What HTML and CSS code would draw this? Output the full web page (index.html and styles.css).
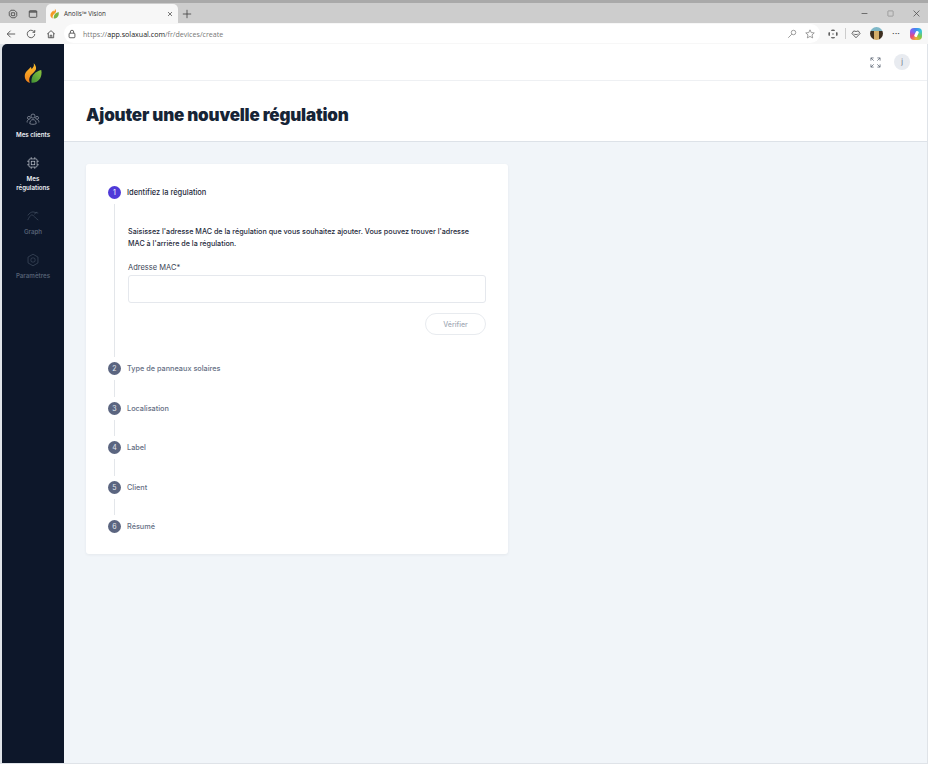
FILE: index.html
```html
<!DOCTYPE html>
<html lang="fr">
<head>
    <meta charset="UTF-8">
    <meta name="viewport" content="width=device-width, initial-scale=1.0">
    <title>Anolis™ Vision</title>
    <link rel="stylesheet" href="styles.css">
</head>
<body>
    <!-- Browser tab strip -->
    <div class="tabstrip">
        <svg class="chrome-icon" viewBox="0 0 12 12"><path d="M3.500 1.500h4l3 2.500v4l-2 2.500h-4l-3-2.500v-4z M4 4.500h4v3.500h-4z"/></svg>
        <svg class="chrome-icon gap-tab" viewBox="0 0 12 12"><rect x="1.500" y="2" width="9" height="8" rx="1"/><path class="thick" d="M1.500 3.500h9"/></svg>
        <div class="tab">
            <svg class="tab-logo" viewBox="0 0 24 28"><path fill="#f59a23" d="M13 1c1 4-1 6-3 8 0-1 0-2-1-3C7 9 1 12 1 18c0 5 3 8 7 9-2-3-1-7 1-10 3-3 6-5 7-8 .6-3-1-6-3-8z"/><path fill="#7cb342" d="M23 10c-8 2-14 7-13 17 9 1 15-7 13-17z"/></svg>
            <span class="tab-title">Anolis™ Vision</span>
            <svg class="tab-close" viewBox="0 0 12 12"><path d="M2 2l8 8M10 2l-8 8"/></svg>
        </div>
        <svg class="chrome-icon plus" viewBox="0 0 12 12"><path d="M6 1v10M1 6h10"/></svg>
        <div class="window-btns">
            <svg class="win-icon" viewBox="0 0 12 12"><path d="M1 6h10"/></svg>
            <svg class="win-icon light" viewBox="0 0 12 12"><rect x="1.500" y="1.500" width="9" height="9" rx="1"/></svg>
            <svg class="win-icon" viewBox="0 0 12 12"><path d="M1 1l10 10M11 1L1 11"/></svg>
        </div>
    </div>

    <!-- Browser toolbar -->
    <div class="toolbar">
        <svg class="chrome-icon" viewBox="0 0 12 12"><path d="M11 6H1.500M5.500 2l-4 4 4 4"/></svg>
        <svg class="chrome-icon tool" viewBox="0 0 12 12"><path d="M10.500 6a4.500 4.500 0 1 1-1.300-3.200L10.500 4V1.200M10.500 4H7.800"/></svg>
        <svg class="chrome-icon tool" viewBox="0 0 12 12"><path d="M1.500 6L6 2l4.500 4M2.800 5v5.500h6.400V5M5 10.500V7.500h2v3"/></svg>
        <div class="urlbar">
            <svg class="chrome-icon" viewBox="0 0 12 12"><rect x="2.500" y="5" width="7" height="5.500" rx="1"/><path d="M4 5V3.500a2 2 0 0 1 4 0V5"/></svg>
            <span class="url"><span class="url-dim">https://</span>app.solaxual.com<span class="url-dim">/fr/devices/create</span></span>
            <svg class="chrome-icon light" viewBox="0 0 12 12"><circle cx="7.800" cy="4.200" r="2.700"/><path d="M5.800 6.200L1.500 10.500"/></svg>
            <svg class="chrome-icon light" viewBox="0 0 12 12"><path d="M6 1l1.500 3.300 3.600.4-2.700 2.400.8 3.600L6 8.900l-3.200 1.800.8-3.600L.9 4.700l3.600-.4z"/></svg>
        </div>
        <svg class="chrome-icon ext" viewBox="0 0 12 12"><path class="thick" d="M4 1.800a4.500 4.500 0 0 1 4 0M10.200 4a4.500 4.500 0 0 1 0 4M8 10.200a4.500 4.500 0 0 1-4 0M1.800 8a4.500 4.500 0 0 1 0-4"/><path d="M5 6h2"/></svg>
        <span class="toolbar-sep"></span>
        <svg class="chrome-icon heart" viewBox="0 0 12 12"><path d="M6 10.500L1.200 5.500 3 2.500h2l1 1 1-1h2l1.800 3zM3.500 5.500l1.500 1.500 1-1 1 1 1.500-1.500"/></svg>
        <span class="avatar"></span>
        <span class="dots">···</span>
        <span class="copilot"></span>
    </div>

    <div class="app">
        <!-- Sidebar -->
        <nav class="sidebar">
            <svg class="logo" viewBox="0 0 24 28"><defs><linearGradient id="flame" x1="0" y1="0" x2="0" y2="1"><stop offset="0" stop-color="#fbc02d"/><stop offset="1" stop-color="#ef7f1a"/></linearGradient><linearGradient id="leaf" x1="1" y1="0" x2="0" y2="1"><stop offset="0" stop-color="#8cc63f"/><stop offset="1" stop-color="#3f8f35"/></linearGradient></defs><path fill="url(#flame)" d="M13 1c1 4-1 6-3 8 0-1 0-2-1-3C7 9 1 12 1 18c0 5 3 8 7 9-2-3-1-7 1-10 3-3 6-5 7-8 .6-3-1-6-3-8z"/><path fill="url(#leaf)" d="M23 10c-8 2-14 7-13 17 9 1 15-7 13-17z"/></svg>
            <a class="nav-item active">
                <svg class="nav-icon dim" viewBox="0 0 24 24"><circle cx="12" cy="7" r="3.500"/><circle cx="5" cy="10" r="2.500"/><circle cx="19" cy="10" r="2.500"/><path d="M6.500 20c0-4 2-7 5.500-7s5.500 3 5.500 7c-3 1.500-8 1.500-11 0zM2 18c-.5-2 .5-4 2.500-5M22 18c.5-2-.5-4-2.500-5"/></svg>
                <span>Mes clients</span>
            </a>
            <a class="nav-item active">
                <svg class="nav-icon" viewBox="0 0 24 24"><rect x="5" y="5" width="14" height="14" rx="2"/><rect x="9" y="9" width="6" height="6"/><path d="M9 2v3M15 2v3M9 19v3M15 19v3M2 9h3M2 15h3M19 9h3M19 15h3"/></svg>
                <span>Mes<br>régulations</span>
            </a>
            <a class="nav-item">
                <svg class="nav-icon" viewBox="0 0 24 24"><path d="M3 11c3-4 6-6 9-6l9 2M3 19c2-4 4-8 7-9 3 0 6 6 11 9M14 9l5-4"/></svg>
                <span>Graph</span>
            </a>
            <a class="nav-item">
                <svg class="nav-icon" viewBox="0 0 24 24"><path d="M12 2l8.500 5v10L12 22l-8.500-5V7z"/><rect x="8.500" y="8.500" width="7" height="7" rx="2.500"/></svg>
                <span>Paramètres</span>
            </a>
        </nav>

        <div class="main">
            <header class="topbar">
                <svg class="expand" viewBox="0 0 12 12"><path d="M1 4V1h3M1 1l3 3M8 1h3v3M11 1L8 4M1 8v3h3M1 11l3-3M8 11h3V8M11 11L8 8"/></svg>
                <span class="user-badge">j</span>
            </header>
            <div class="page-head">
                <h1>Ajouter une nouvelle régulation</h1>
            </div>
            <div class="content">
                <section class="card">
                    <!-- Stepper -->
                    <div class="step">
                        <div class="step-head"><span class="step-num current">1</span><span class="step-label current">Identifiez la régulation</span></div>
                        <div class="step-body open">
                            <p class="help">Saisissez l'adresse MAC de la régulation que vous souhaitez ajouter. Vous pouvez trouver l'adresse MAC à l'arrière de la régulation.</p>
                            <label class="field-label" for="mac">Adresse MAC*</label>
                            <input class="field" id="mac" type="text">
                            <div class="actions"><button class="verify" disabled>Vérifier</button></div>
                        </div>
                    </div>
                    <div class="step">
                        <div class="step-head"><span class="step-num">2</span><span class="step-label">Type de panneaux solaires</span></div>
                        <div class="step-body"></div>
                    </div>
                    <div class="step">
                        <div class="step-head"><span class="step-num">3</span><span class="step-label">Localisation</span></div>
                        <div class="step-body"></div>
                    </div>
                    <div class="step">
                        <div class="step-head"><span class="step-num">4</span><span class="step-label">Label</span></div>
                        <div class="step-body"></div>
                    </div>
                    <div class="step">
                        <div class="step-head"><span class="step-num">5</span><span class="step-label">Client</span></div>
                        <div class="step-body"></div>
                    </div>
                    <div class="step">
                        <div class="step-head"><span class="step-num">6</span><span class="step-label">Résumé</span></div>
                    </div>
                </section>
            </div>
        </div>
    </div>
</body>
</html>
```

FILE: styles.css
```css
/* General Page Styling */
* {
    box-sizing: border-box;
}

body {
    margin: 0;
    height: 764px;
    display: flex;
    flex-direction: column;
    background-color: #fff;
    font-family: "Inter", "Liberation Sans", sans-serif;
    overflow: hidden;
}

/* Browser chrome */
.tabstrip {
    height: 23px;
    flex: none;
    display: flex;
    align-items: flex-end;
    padding: 0 8px;
    background-color: #cdcdcd;
    border-top: 3px solid #a9a9a9;
}

.chrome-icon {
    width: 10px;
    height: 10px;
    flex: none;
    fill: none;
    stroke: #444;
    stroke-width: 1;
}

.chrome-icon.light,
.win-icon.light {
    stroke: #8a8a8a;
}

.thick {
    stroke-width: 1.6;
}

.tabstrip > .chrome-icon {
    margin-bottom: 4px;
}

.gap-tab {
    margin-left: 10px;
    margin-right: 8px;
}

.tab {
    width: 132px;
    height: 19px;
    display: flex;
    align-items: center;
    padding: 0 5px 0 4px;
    background-color: #f7f7f7;
    border-radius: 5px 5px 0 0;
}

.tab-logo {
    width: 9px;
    height: 11px;
    margin-right: 5px;
}

.tab-title {
    flex: 1;
    font-size: 6.3px;
    color: #333;
    font-family: "Open Sans", sans-serif;
}

.tab-close {
    width: 6px;
    height: 6px;
    fill: none;
    stroke: #444;
    stroke-width: 1.4;
}

.plus {
    margin-left: 4px;
}

.window-btns {
    margin-left: auto;
    display: flex;
    gap: 19px;
    margin-bottom: 6px;
}

.win-icon {
    width: 7px;
    height: 7px;
    fill: none;
    stroke: #444;
    stroke-width: 1.2;
}

.toolbar {
    height: 21px;
    flex: none;
    display: flex;
    align-items: center;
    padding: 0 6px;
    background-color: #f7f7f7;
}

.tool {
    margin-left: 10px;
}

.urlbar {
    width: 756px;
    height: 19px;
    margin-left: 8px;
    display: flex;
    align-items: center;
    gap: 8px;
    padding: 0 5px 0 3px;
    background-color: #fff;
    border-radius: 10px;
}

.url {
    flex: 1;
    margin-left: -2px;
    font-size: 7.1px;
    color: #222;
    font-family: "Open Sans", sans-serif;
}

.url-dim {
    color: #777;
}

.ext {
    margin-left: 8px;
}

.toolbar-sep {
    width: 1px;
    height: 11px;
    margin-left: 7px;
    background-color: #ccc;
}

.heart {
    margin-left: 5px;
}

.avatar {
    width: 13px;
    height: 13px;
    margin-left: 9px;
    flex: none;
    border-radius: 50%;
    background:
        linear-gradient(90deg, #3d2f20 0 30%, #d3ad6a 30% 70%, #3d2f20 70%) 0 4px / 100% 100% no-repeat,
        #7fb8c8;
}

.dots {
    width: 12px;
    margin-left: 7px;
    text-align: center;
    font-size: 9px;
    color: #333;
}

.copilot {
    width: 12px;
    height: 12px;
    margin-left: 8px;
    flex: none;
    display: flex;
    align-items: center;
    justify-content: center;
    border-radius: 4px;
    background: conic-gradient(#3f8cf0, #38c6d8, #7cc84a, #f2b233, #e8487a, #8b5cf0, #3f8cf0);
}

.copilot::after {
    content: "";
    width: 3px;
    height: 6px;
    background-color: #fff;
    border-radius: 1px;
    transform: rotate(25deg);
}

/* App layout */
.app {
    flex: 1;
    display: flex;
    min-height: 0;
    padding: 0 1px 1px 2px;
    background-color: #dfe3e8;
}

.sidebar {
    width: 62px;
    flex: none;
    display: flex;
    flex-direction: column;
    align-items: center;
    padding-top: 18px;
    background-color: #0d172a;
    border-radius: 5px 0 0 0;
}

.logo {
    width: 18px;
    height: 22px;
    margin-bottom: 28px;
}

.nav-item {
    width: 100%;
    display: flex;
    flex-direction: column;
    align-items: center;
    gap: 4px;
    height: 44px;
    text-align: center;
    font-size: 6.2px;
    line-height: 9px;
    font-weight: 600;
    color: #535f72;
}

.nav-item.active {
    color: #eef1f5;
}

.nav-item:nth-of-type(2) {
    height: 53px;
}

.nav-icon {
    width: 14px;
    height: 14px;
    fill: none;
    stroke: #414d60;
    stroke-width: 1.2;
}

.active .nav-icon {
    stroke: #c4cad3;
}

.active .nav-icon.dim {
    stroke: #99a1ae;
}

.main {
    flex: 1;
    min-width: 0;
    display: flex;
    flex-direction: column;
}

.topbar {
    height: 37px;
    flex: none;
    display: flex;
    align-items: center;
    justify-content: flex-end;
    gap: 13px;
    padding-right: 17px;
    background-color: #fff;
    border-bottom: 1px solid #eef0f3;
}

.expand {
    width: 11px;
    height: 11px;
    fill: none;
    stroke: #555f6d;
    stroke-width: 0.8;
}

.user-badge {
    width: 16px;
    height: 16px;
    border-radius: 50%;
    background-color: #e8ebf0;
    color: #5c6675;
    font-size: 7px;
    line-height: 16px;
    text-align: center;
}

.page-head {
    height: 61px;
    flex: none;
    display: flex;
    align-items: center;
    padding: 7px 0 0 22px;
    background-color: #fff;
    border-bottom: 1px solid #dde2e8;
}

h1 {
    margin: 0;
    font-size: 17px;
    font-weight: 900;
    color: #162436;
    letter-spacing: -0.2px;
}

.content {
    flex: 1;
    padding: 22px;
    background-color: #f1f5f9;
}

/* Stepper card */
.card {
    width: 422px;
    height: 390px;
    padding: 22px 22px 0;
    background-color: #fff;
    border-radius: 3px;
    box-shadow: 0 1px 3px rgba(30, 41, 59, 0.06);
}

.step-head {
    height: 13px;
    display: flex;
    align-items: center;
    gap: 6px;
}

.step-num {
    width: 13px;
    height: 13px;
    flex: none;
    border-radius: 50%;
    background-color: #5b6580;
    color: #e6e9ef;
    font-size: 7px;
    line-height: 13px;
    text-align: center;
}

.step-num.current {
    background-color: #4f3ad8;
    color: #fff;
}

.step-label {
    font-size: 7.3px;
    font-weight: 500;
    color: #667085;
}

.step-label.current {
    font-size: 7.5px;
    color: #1e2a3b;
}

.step-body {
    height: 16.5px;
    margin: 5px 0 5px 6px;
    border-left: 1px solid #e3e6ea;
}

.step-body.open {
    height: 153px;
    padding: 22px 0 0 13px;
}

.help {
    margin: 0 0 13px;
    font-size: 7.2px;
    line-height: 12px;
    font-weight: 500;
    color: #1e2a3b;
}

.field-label {
    display: block;
    margin-bottom: 3px;
    font-size: 7.5px;
    color: #3a4556;
}

.field {
    display: block;
    width: 100%;
    height: 28px;
    border: 1px solid #e5e8ed;
    border-radius: 3px;
    background-color: #fff;
    outline: none;
}

.actions {
    display: flex;
    justify-content: flex-end;
    margin-top: 10px;
}

.verify {
    width: 61px;
    height: 22px;
    border: 1px solid #e8ebef;
    border-radius: 11px;
    background-color: #fff;
    font-family: inherit;
    font-size: 7px;
    font-weight: 500;
    color: #a3abb6;
}
```
